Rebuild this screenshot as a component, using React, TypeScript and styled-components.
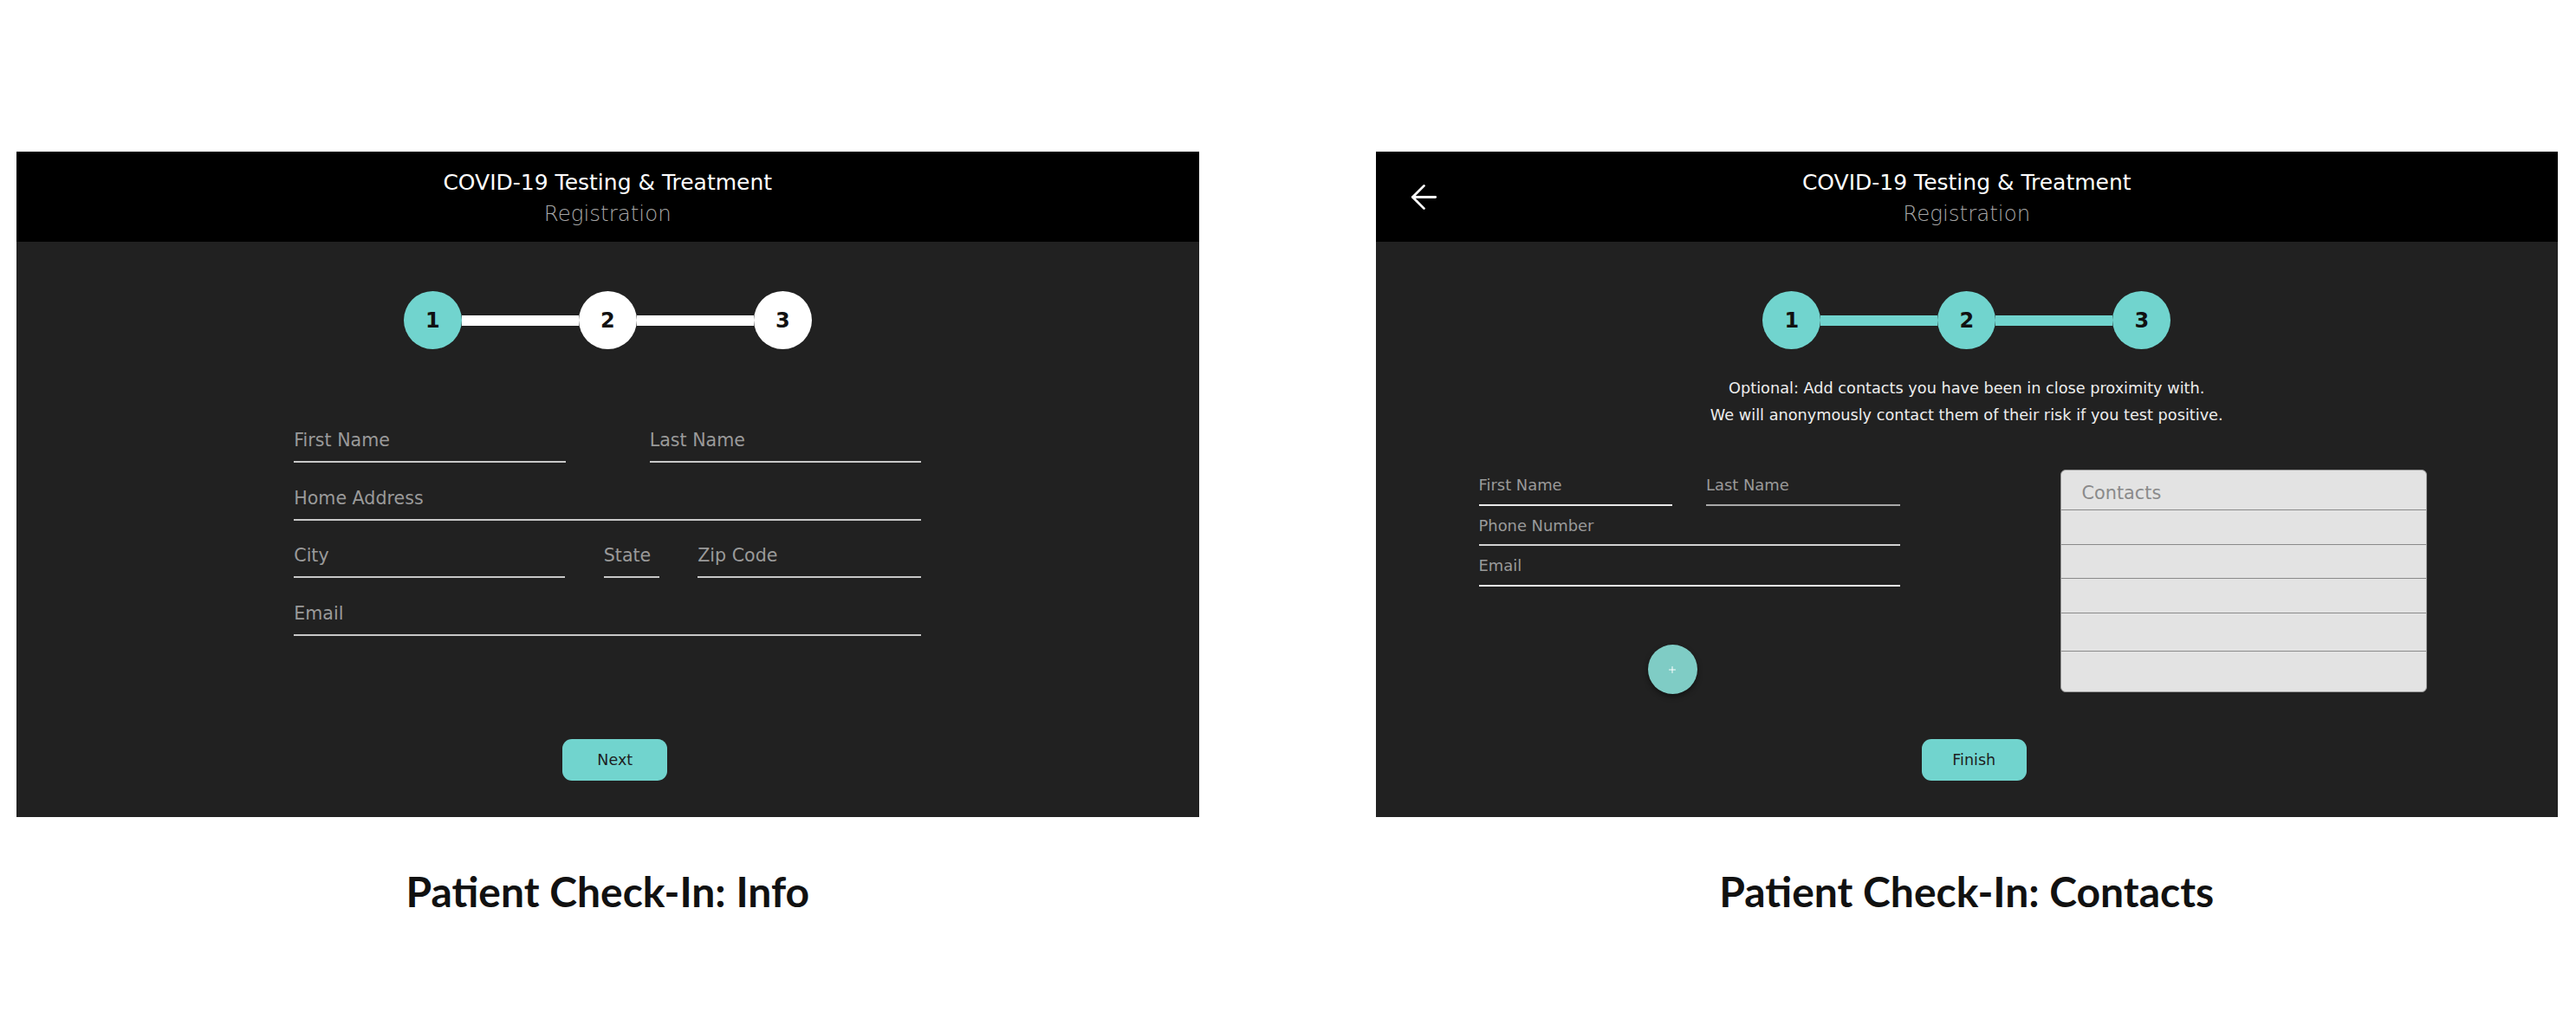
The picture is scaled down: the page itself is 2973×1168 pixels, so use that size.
import styled, { createGlobalStyle } from 'styled-components';
import { ArrowLeft, Plus } from 'lucide-react';

const teal = '#71d4ce';
const uiFont = '"DejaVu Sans", "Noto Sans", sans-serif';

const GlobalStyle = createGlobalStyle`
  body {
    margin: 0;
    background: #ffffff;
  }
`;

const Page = styled.div`
  display: flex;
  gap: 204px;
  width: 2973px;
  box-sizing: border-box;
  padding: 175px 21px 0 19px;
`;

const Column = styled.section`
  width: 1365px;
  display: flex;
  flex-direction: column;
  align-items: center;
`;

const Screen = styled.div`
  width: 100%;
  height: 768px;
  display: flex;
  flex-direction: column;
  background: #212121;
  font-family: ${uiFont};
`;

const Header = styled.header`
  height: 104px;
  flex: none;
  background: #000000;
  display: grid;
  grid-template-columns: 1fr auto 1fr;
  align-items: center;
`;

const BackButton = styled.button`
  justify-self: start;
  margin-left: 33px;
  padding: 0;
  border: none;
  background: none;
  color: #ffffff;
  display: flex;
`;

const TitleBlock = styled.div`
  grid-column: 2;
  padding-top: 4px;
  text-align: center;
`;

const Title = styled.div`
  font-size: 25px;
  line-height: 30px;
  color: #ffffff;
`;

const Subtitle = styled.div`
  margin-top: 6.5px;
  font-size: 24.5px;
  font-weight: 200;
  line-height: 30px;
  color: #a8a8a8;
`;

const Body = styled.div`
  flex: 1;
  display: flex;
  flex-direction: column;
  align-items: center;
`;

const Stepper = styled.div`
  margin-top: 57px;
  display: flex;
  align-items: center;
`;

const Dot = styled.div<{ $active: boolean }>`
  width: 67px;
  height: 67px;
  border-radius: 50%;
  background: ${p => (p.$active ? teal : '#ffffff')};
  display: flex;
  align-items: center;
  justify-content: center;
  font-size: 24px;
  font-weight: 700;
  color: #111111;
`;

const Bar = styled.div<{ $active: boolean }>`
  width: 135px;
  height: 12px;
  background: ${p => (p.$active ? teal : '#ffffff')};
`;

const InfoForm = styled.div`
  width: 724px;
  margin-top: 93px;
  display: flex;
  flex-direction: column;
  gap: 28.7px;
`;

const FieldRow = styled.div<{ $cols: string; $gap: number }>`
  display: grid;
  grid-template-columns: ${p => p.$cols};
  column-gap: ${p => p.$gap}px;
`;

const Field = styled.div<{ $small?: boolean; $line?: string }>`
  box-sizing: border-box;
  font-size: ${p => (p.$small ? 17.9 : 20.6)}px;
  line-height: ${p => (p.$small ? 21 : 24)}px;
  color: #9a9a9a;
  padding-bottom: ${p => (p.$small ? 11.7 : 12)}px;
  border-bottom: 2px solid ${p => p.$line ?? '#c8c8c8'};
  white-space: nowrap;
`;

const ActionRow = styled.div<{ $top: number }>`
  margin-top: ${p => p.$top}px;
  display: flex;
`;

const ActionButton = styled.button`
  width: 121px;
  height: 48px;
  margin-left: 17px;
  border: none;
  border-radius: 11px;
  background: ${teal};
  font-family: ${uiFont};
  font-size: 17.5px;
  color: #1e1e1e;
  padding: 0;
`;

const Note = styled.p`
  margin: 30px 0 0;
  font-size: 17.7px;
  line-height: 31px;
  color: #ededed;
  text-align: center;
`;

const ContactSection = styled.div`
  align-self: stretch;
  margin-top: 47px;
  padding-left: 119px;
  display: flex;
  gap: 185px;
`;

const ContactForm = styled.div`
  width: 486px;
  padding-top: 7px;
  display: flex;
  flex-direction: column;
  gap: 12px;
`;

const AddButton = styled.button`
  width: 57px;
  height: 57px;
  margin: 67px 0 0 195px;
  padding: 0;
  border: none;
  border-radius: 50%;
  background: #7fccc5;
  color: #ffffff;
  display: flex;
  align-items: center;
  justify-content: center;
  box-shadow: 0 3px 6px rgba(0, 0, 0, 0.45);
`;

const ContactsBox = styled.div`
  width: 423px;
  height: 257px;
  box-sizing: border-box;
  display: flex;
  flex-direction: column;
  background: #e3e3e3;
  border: 1px solid #9a9a9a;
  border-radius: 6px;
  overflow: hidden;
`;

const BoxHead = styled.div`
  height: 46px;
  flex: none;
  box-sizing: border-box;
  padding: 14px 24px 0;
  font-size: 20.8px;
  line-height: 24px;
  color: #8a8a8a;
  border-bottom: 1px solid #8a8a8a;
`;

const BoxRow = styled.div<{ $h?: number }>`
  box-sizing: border-box;
  flex: ${p => (p.$h ? 'none' : '1')};
  height: ${p => (p.$h ? `${p.$h}px` : 'auto')};
  border-bottom: ${p => (p.$h ? '1px solid #8a8a8a' : 'none')};
`;

const Caption = styled.h2`
  margin: 57px 0 0;
  font-family: Lato, "Liberation Sans", sans-serif;
  font-weight: 700;
  font-size: 48px;
  line-height: 1.2;
  color: #111111;
`;

function Steps({ reached }: { reached: number }) {
  return (
    <Stepper>
      {[1, 2, 3].map(n => (
        <StepItem key={n} n={n} reached={reached} />
      ))}
    </Stepper>
  );
}

function StepItem({ n, reached }: { n: number; reached: number }) {
  return (
    <>
      {n > 1 && <Bar $active={n <= reached} />}
      <Dot $active={n <= reached}>{n}</Dot>
    </>
  );
}

function ScreenHeader({ back }: { back?: boolean }) {
  return (
    <Header>
      {back && (
        <BackButton aria-label="Back">
          <ArrowLeft size={45} strokeWidth={1.5} />
        </BackButton>
      )}
      <TitleBlock>
        <Title>COVID-19 Testing &amp; Treatment</Title>
        <Subtitle>Registration</Subtitle>
      </TitleBlock>
    </Header>
  );
}

const contactRows = [40, 39, 40, 44];

export default function App() {
  return (
    <>
      <GlobalStyle />
      <Page>
        <Column>
          <Screen>
            <ScreenHeader />
            <Body>
              <Steps reached={1} />
              <InfoForm>
                <FieldRow $cols="1fr 1fr" $gap={97}>
                  <Field>First Name</Field>
                  <Field>Last Name</Field>
                </FieldRow>
                <Field>Home Address</Field>
                <FieldRow $cols="313px 64px 1fr" $gap={44.5}>
                  <Field>City</Field>
                  <Field>State</Field>
                  <Field>Zip Code</Field>
                </FieldRow>
                <Field>Email</Field>
              </InfoForm>
              <ActionRow $top={119}>
                <ActionButton>Next</ActionButton>
              </ActionRow>
            </Body>
          </Screen>
          <Caption>Patient Check-In: Info</Caption>
        </Column>

        <Column>
          <Screen>
            <ScreenHeader back />
            <Body>
              <Steps reached={3} />
              <Note>
                Optional: Add contacts you have been in close proximity with.
                <br />
                We will anonymously contact them of their risk if you test positive.
              </Note>
              <ContactSection>
                <div>
                  <ContactForm>
                    <FieldRow $cols="1fr 1fr" $gap={39}>
                      <Field $small $line="#e8e8e8">First Name</Field>
                      <Field $small $line="#a9a9a9">Last Name</Field>
                    </FieldRow>
                    <Field $small $line="#d2d2d2">Phone Number</Field>
                    <Field $small $line="#eeeeee">Email</Field>
                  </ContactForm>
                  <AddButton aria-label="Add contact">
                    <Plus size={12} strokeWidth={2} />
                  </AddButton>
                </div>
                <ContactsBox>
                  <BoxHead>Contacts</BoxHead>
                  {contactRows.map((h, i) => (
                    <BoxRow key={i} $h={h} />
                  ))}
                  <BoxRow />
                </ContactsBox>
              </ContactSection>
              <ActionRow $top={52}>
                <ActionButton>Finish</ActionButton>
              </ActionRow>
            </Body>
          </Screen>
          <Caption>Patient Check-In: Contacts</Caption>
        </Column>
      </Page>
    </>
  );
}
